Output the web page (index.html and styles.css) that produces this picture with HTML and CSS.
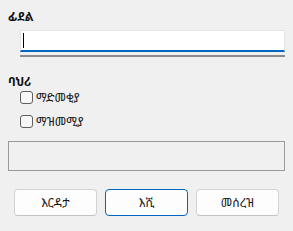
FILE: index.html
```html
<!DOCTYPE html>
<html lang="am">
<head>
<meta charset="utf-8">
<link rel="stylesheet" href="styles.css">
</head>
<body>
<div class="dialog">
  <div class="title">ፊደል</div>
  <div class="input"><span class="caret"></span></div>
  <div class="bar"></div>
  <div class="title title-2">ባህሪ</div>
  <label class="check check-1"><span class="box"></span><span class="check-label">ማድመቂያ</span></label>
  <label class="check check-2"><span class="box"></span><span class="check-label">ማዝመሚያ</span></label>
  <div class="preview"></div>
  <div class="buttons">
    <button class="btn">እርዳታ</button>
    <button class="btn btn-default">እሺ</button>
    <button class="btn">መሰረዝ</button>
  </div>
</div>
</body>
</html>
```
FILE: styles.css
```css
html, body {
  margin: 0;
  padding: 0;
  background: #f0f0f0;
}
body {
  font-family: "Noto Sans Ethiopic", "Abyssinica SIL", "Noto Sans", "DejaVu Sans", sans-serif;
  font-size: 12px;
  color: #1a1a1a;
}
.dialog {
  padding: 0 8px;
  width: 277px;
}
.title {
  margin-top: 9px;
  line-height: 16px;
  height: 16px;
  font-weight: bold;
  color: #111;
}
.title-2 {
  margin-top: 17px;
}
.input {
  margin-top: 5px;
  margin-left: 12px;
  width: 263px;
  height: 19px;
  background: #fff;
  border: 1px solid #e4e4e4;
  border-bottom: 2px solid #0067c0;
  display: flex;
}
.caret {
  display: block;
  width: 1px;
  height: 15px;
  margin-top: 2px;
  margin-left: 2px;
  background: #000;
}
.bar {
  margin-top: 3px;
  margin-left: 12px;
  width: 265px;
  height: 2px;
  background: #8b8b8f;
}
.check {
  display: flex;
  align-items: center;
  height: 13px;
  margin-left: 12px;
}
.check-1 { margin-top: 1px; }
.check-2 { margin-top: 11px; }
.box {
  width: 11px;
  height: 11px;
  border: 1px solid #5f5f5f;
  border-radius: 3px;
  background: #f7f7f7;
  flex: none;
}
.check-label {
  margin-left: 3px;
  line-height: 13px;
  color: #1a1a1a;
}
.preview {
  margin-top: 13px;
  height: 28px;
  border: 1px solid #9a9a9a;
}
.buttons {
  margin-top: 18px;
  padding: 0 6px;
  display: flex;
  gap: 8px;
}
.btn {
  width: 83px;
  height: 27px;
  background: #fdfdfd;
  border: 1px solid #d3d3d3;
  border-bottom-color: #c4c4c4;
  border-radius: 4px;
  font-family: inherit;
  font-size: 12px;
  color: #1a1a1a;
  padding: 0;
}
.btn-default {
  border: 1px solid #0067c0;
}
```
